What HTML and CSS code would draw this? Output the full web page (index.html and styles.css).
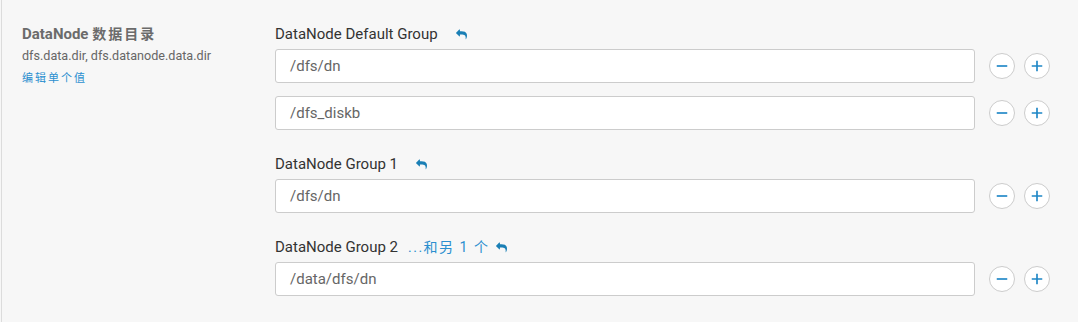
FILE: index.html
```html
<!DOCTYPE html>
<html>
<head>
<meta charset="utf-8">
<link rel="stylesheet" href="styles.css">
</head>
<body>
<div class="panel">
  <div class="meta">
    <div class="title">DataNode <span class="cjk">数据目录</span></div>
    <div class="keys">dfs.data.dir, dfs.datanode.data.dir</div>
    <a class="edit">编辑单个值</a>
  </div>
  <div class="groups">
    <div class="group">
      <div class="glabel">DataNode Default Group <svg class="reply" viewBox="0 0 1792 1792"><path d="M1792 1120q0 166-127 451-3 7-10.5 24t-13.5 30-13 22q-12 17-28 17-15 0-23.5-10t-8.5-25q0-9 2.5-26.5t2.5-23.5q5-68 5-123 0-101-17.5-181t-48.5-138.5-80-101-105.5-69.5-133-42.5-154-21.5-175.5-6h-224v256q0 26-19 45t-45 19-45-19l-512-512q-19-19-19-45t19-45l512-512q19-19 45-19t45 19 19 45v256h224q713 0 875 403 53 134 53 333z"/></svg></div>
      <div class="row"><div class="input">/dfs/dn</div><span class="btn"><svg viewBox="0 0 24 24"><path d="M5 12h14"/></svg></span><span class="btn"><svg viewBox="0 0 24 24"><path d="M5 12h14M12 5v14"/></svg></span></div>
      <div class="row"><div class="input">/dfs_diskb</div><span class="btn"><svg viewBox="0 0 24 24"><path d="M5 12h14"/></svg></span><span class="btn"><svg viewBox="0 0 24 24"><path d="M5 12h14M12 5v14"/></svg></span></div>
    </div>
    <div class="group">
      <div class="glabel">DataNode Group 1 <svg class="reply" viewBox="0 0 1792 1792"><path d="M1792 1120q0 166-127 451-3 7-10.5 24t-13.5 30-13 22q-12 17-28 17-15 0-23.5-10t-8.5-25q0-9 2.5-26.5t2.5-23.5q5-68 5-123 0-101-17.5-181t-48.5-138.5-80-101-105.5-69.5-133-42.5-154-21.5-175.5-6h-224v256q0 26-19 45t-45 19-45-19l-512-512q-19-19-19-45t19-45l512-512q19-19 45-19t45 19 19 45v256h224q713 0 875 403 53 134 53 333z"/></svg></div>
      <div class="row"><div class="input">/dfs/dn</div><span class="btn"><svg viewBox="0 0 24 24"><path d="M5 12h14"/></svg></span><span class="btn"><svg viewBox="0 0 24 24"><path d="M5 12h14M12 5v14"/></svg></span></div>
    </div>
    <div class="group">
      <div class="glabel">DataNode Group 2 <a class="more">...和另 1 个</a> <svg class="reply" viewBox="0 0 1792 1792"><path d="M1792 1120q0 166-127 451-3 7-10.5 24t-13.5 30-13 22q-12 17-28 17-15 0-23.5-10t-8.5-25q0-9 2.5-26.5t2.5-23.5q5-68 5-123 0-101-17.5-181t-48.5-138.5-80-101-105.5-69.5-133-42.5-154-21.5-175.5-6h-224v256q0 26-19 45t-45 19-45-19l-512-512q-19-19-19-45t19-45l512-512q19-19 45-19t45 19 19 45v256h224q713 0 875 403 53 134 53 333z"/></svg></div>
      <div class="row"><div class="input">/data/dfs/dn</div><span class="btn"><svg viewBox="0 0 24 24"><path d="M5 12h14"/></svg></span><span class="btn"><svg viewBox="0 0 24 24"><path d="M5 12h14M12 5v14"/></svg></span></div>
    </div>
  </div>
</div>
</body>
</html>
```

FILE: styles.css
```css
html, body {
  margin: 0;
  padding: 0;
  background: #f7f7f7;
}
body {
  font-family: Roboto, "Noto Sans CJK SC", sans-serif;
  width: 1078px;
  height: 322px;
  overflow: hidden;
}
.panel {
  margin-left: 1px;
  border-left: 1px solid #dcdcdc;
  height: 322px;
  display: flex;
  box-sizing: border-box;
  padding: 25px 0 0 20px;
}
.meta {
  width: 253px;
  color: #666;
}
.title {
  font-weight: bold;
  font-size: 15px;
  line-height: 18px;
  color: #6b6b6b;
}
.title .cjk {
  letter-spacing: 2px;
  font-size: 14px;
}
.keys {
  font-size: 12.6px;
  line-height: 16px;
  margin-top: 5px;
}
.edit {
  display: block;
  font-size: 11px;
  line-height: 14px;
  margin-top: 8px;
  color: #2b8fcf;
  letter-spacing: 2px;
}
.groups {
  display: flex;
  flex-direction: column;
  gap: 25px;
}
.group {
  display: flex;
  flex-direction: column;
  gap: 13px;
}
.glabel {
  font-size: 15px;
  line-height: 18px;
  color: #333;
  margin-bottom: -7px;
  display: flex;
  align-items: center;
}
.reply {
  width: 11px;
  height: 11px;
  fill: #1a7fb5;
  margin-left: 18px;
}
.more {
  color: #2b8fcf;
  margin-left: 10px;
  font-size: 14px;
  letter-spacing: 1.5px;
}
.more + .reply {
  margin-left: 7px;
}
.row {
  display: flex;
  align-items: center;
}
.input {
  width: 700px;
  height: 34px;
  box-sizing: border-box;
  border: 1px solid #ccc;
  border-radius: 3px;
  background: #fff;
  padding-left: 14px;
  font-size: 15px;
  line-height: 32px;
  color: #666;
}
.btn {
  width: 26px;
  height: 26px;
  box-sizing: border-box;
  border: 1px solid #ccc;
  border-radius: 50%;
  background: #fff;
  margin-left: 9px;
  display: flex;
  align-items: center;
  justify-content: center;
}
.input + .btn {
  margin-left: 14px;
}
.btn svg {
  width: 18px;
  height: 18px;
  stroke: #1e86c6;
  stroke-width: 2.2;
  fill: none;
}
```
